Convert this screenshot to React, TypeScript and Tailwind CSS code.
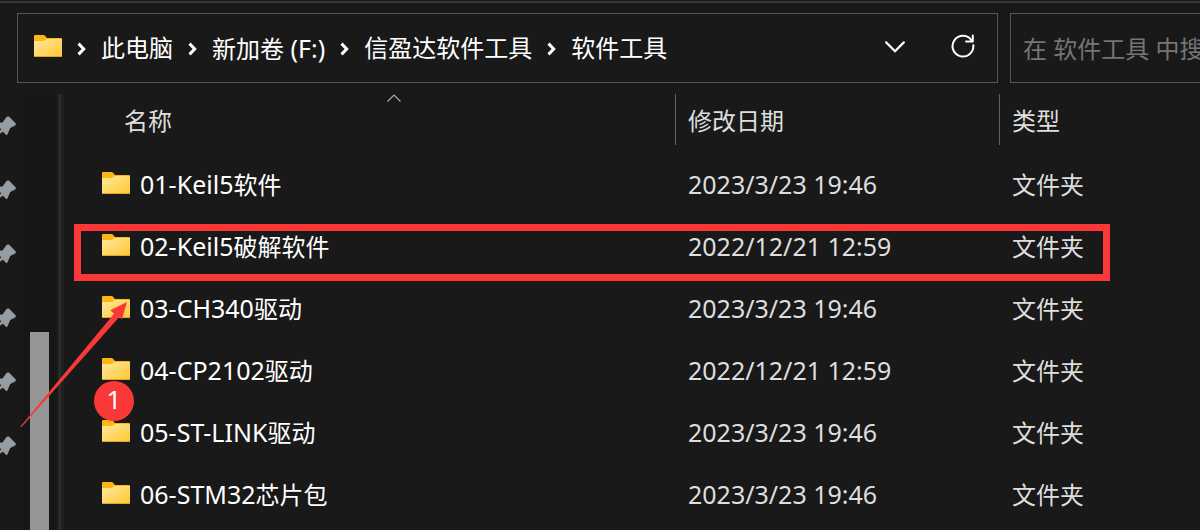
import React from "react";

type Entry = { latin: string; cjk: string; modified: string };

const entries: Entry[] = [
  { latin: "01-Keil5", cjk: "软件", modified: "2023/3/23 19:46" },
  { latin: "02-Keil5", cjk: "破解软件", modified: "2022/12/21 12:59" },
  { latin: "03-CH340", cjk: "驱动", modified: "2023/3/23 19:46" },
  { latin: "04-CP2102", cjk: "驱动", modified: "2022/12/21 12:59" },
  { latin: "05-ST-LINK", cjk: "驱动", modified: "2023/3/23 19:46" },
  { latin: "06-STM32", cjk: "芯片包", modified: "2023/3/23 19:46" },
];

const crumbs = [
  { label: "此电脑", drive: "" },
  { label: "新加卷", drive: " (F:)" },
  { label: "信盈达软件工具", drive: "" },
  { label: "软件工具", drive: "" },
];
const pins = [1, 2, 3, 4, 5, 6];

function FolderIcon() {
  return (
    <svg width="28" height="22" viewBox="0 0 28 22" className="mb-1 shrink-0" aria-hidden="true">
      <defs>
        <linearGradient id="folder-face" x1="0" y1="0" x2="1" y2="1">
          <stop offset="0" stopColor="#ffe8a0" />
          <stop offset="1" stopColor="#fec72f" />
        </linearGradient>
      </defs>
      <path d="M0 1Q0 0 1 0H9.5Q10.500 0 11.200 1L13 3H27Q28 3 28 4V10H0Z" fill="#fcb714" />
      <path d="M0 6H9.500Q10.500 6 11.300 5.200L12.600 4H28V21Q28 22 27 22H1Q0 22 0 21Z" fill="url(#folder-face)" />
      <path d="M0 20.800Q0 22 1 22H27Q28 22 28 20.800L27.500 21H0.500Z" fill="#e0a52a" />
    </svg>
  );
}

function Separator() {
  return (
    <svg width="7" height="14" viewBox="0 0 7 14" className="mt-0.5 shrink-0 overflow-visible" fill="none" aria-hidden="true">
      <path d="M0.500 1.600L5.700 7L0.500 12.400" stroke="#fff" strokeWidth="3" />
    </svg>
  );
}

function PinIcon() {
  return (
    <svg width="16" height="20" viewBox="0 0 16 20" className="mb-11 block" aria-hidden="true">
      <path
        d="M0 6.700L2.700 6.300L6.300 1.200Q7.600 0 9.200 0.800L15.400 7Q16.300 8.400 15.200 9.400L10.200 12L7.600 18.300Q6.800 19.400 5.600 18.500L3 15.800L0 17.600V14.500L1.300 13.400L0 12Z"
        fill="#949da2"
      />
    </svg>
  );
}

export default function App() {
  return (
    <div className="flex min-h-screen flex-col overflow-hidden bg-[#191919] pt-px font-['Noto_Sans','Noto_Sans_CJK_SC',sans-serif] text-2xl leading-8 text-white">
      <div className="h-0.5 bg-[#3a353c]" />

      <header className="mt-2.5 flex gap-3 pl-[17px]">
        <div className="flex h-[70px] min-w-0 flex-1 items-center border border-[#555] pl-4 pr-[22px]">
          <nav aria-label="路径" className="flex flex-1 items-center gap-4 whitespace-nowrap">
            <FolderIcon />
            {crumbs.map((crumb) => (
              <React.Fragment key={crumb.label}>
                <Separator />
                <a href="#">
                  {crumb.label}
                  {crumb.drive && <span className="whitespace-pre text-[25px]">{crumb.drive}</span>}
                </a>
              </React.Fragment>
            ))}
          </nav>
          <button type="button" aria-label="以前的位置" className="mb-0.5">
            <svg width="20" height="12" viewBox="0 0 20 12" fill="none">
              <path d="M1.200 1.400L10 10.200L18.800 1.400" stroke="#fff" strokeWidth="2.200" strokeLinecap="round" />
            </svg>
          </button>
          <button type="button" aria-label="刷新" className="mb-1 ml-[46px]">
            <svg width="24" height="24" viewBox="0 0 24 24" fill="none" stroke="#fff" strokeWidth="2" strokeLinecap="round" strokeLinejoin="round">
              <path d="M22.300 11.200A10.400 10.400 0 1 1 20.800 6.700" />
              <path d="M21.800 1.500V7.500H15" />
            </svg>
          </button>
        </div>
        <div className="h-[70px] w-[190px] shrink-0 overflow-hidden border border-r-0 border-[#555]">
          <input
            type="search"
            aria-label="搜索"
            placeholder="在 软件工具 中搜索"
            className="h-full w-[260px] bg-transparent pl-3 outline-none placeholder:text-[#757575]"
          />
        </div>
      </header>

      <div className="mt-[11px] flex flex-1">
        <aside aria-label="快速访问" className="w-[22px] shrink-0 pt-[22px]">
          {pins.map((pin) => (
            <PinIcon key={pin} />
          ))}
        </aside>
        <div className="flex w-9 shrink-0 flex-col bg-[#171717] pl-2">
          <div className="mt-[238px] w-[19px] flex-1 bg-[#969696]" />
        </div>
        <div className="w-1.5 shrink-0 border-l-[3px] border-[#2b2b2b] bg-[#1f1f1f]" />

        <main className="relative min-w-0 flex-1">
          <table className="w-full table-fixed border-collapse text-left">
            <colgroup>
              <col className="w-[611px]" />
              <col className="w-[324px]" />
              <col />
            </colgroup>
            <thead className="text-[#dedede]">
              <tr className="align-top">
                <th scope="col" className="h-[60px] p-0 font-normal">
                  <div className="relative ml-12 flex h-[51px] items-center pl-3 pt-0.5">
                    名称
                    <svg width="14" height="8" viewBox="0 0 14 8" fill="none" className="absolute left-1/2 top-0 -translate-x-1/2" aria-hidden="true">
                      <path d="M0.500 7.500L7 1L13.500 7.500" stroke="#aaa" strokeWidth="1.200" />
                    </svg>
                  </div>
                </th>
                <th scope="col" className="p-0 font-normal">
                  <div className="flex h-[51px] items-center border-l border-[#636363] pl-3 pt-0.5">修改日期</div>
                </th>
                <th scope="col" className="p-0 font-normal">
                  <div className="flex h-[51px] items-center border-l border-[#636363] pl-3 pt-0.5">类型</div>
                </th>
              </tr>
            </thead>
            <tbody>
              {entries.map((entry) => (
                <tr key={entry.latin} className="h-[62px]">
                  <td className="p-0 pl-[38px]">
                    <div className="flex items-center gap-2.5">
                      <FolderIcon />
                      <span className="pb-0.5">
                        <span className="text-[25px]">{entry.latin}</span>
                        {entry.cjk}
                      </span>
                    </div>
                  </td>
                  <td className="p-0 pb-0.5 pl-[13px] text-[25px] text-[#dedede]">{entry.modified}</td>
                  <td className="p-0 pl-[13px] text-[#dedede]">文件夹</td>
                </tr>
              ))}
            </tbody>
          </table>

          <div className="pointer-events-none absolute left-2.5 top-[130px] h-[57px] w-[1036px] border-[7px] border-[#fb3838]" />
          <svg width="108" height="128" viewBox="20 301 108 128" className="pointer-events-none absolute -left-11 top-[207px]" aria-hidden="true">
            <path d="M127 302L110.300 310.300L114 313.700L20.500 426.500L21.300 427.300L119 317.300L122 319.300Z" fill="#fb3838" />
          </svg>
          <div className="absolute left-[30px] top-[287px] flex size-10 items-center justify-center rounded-full bg-[#fb3838] pb-1 text-[26px]">
            1
          </div>
        </main>
      </div>
    </div>
  );
}
